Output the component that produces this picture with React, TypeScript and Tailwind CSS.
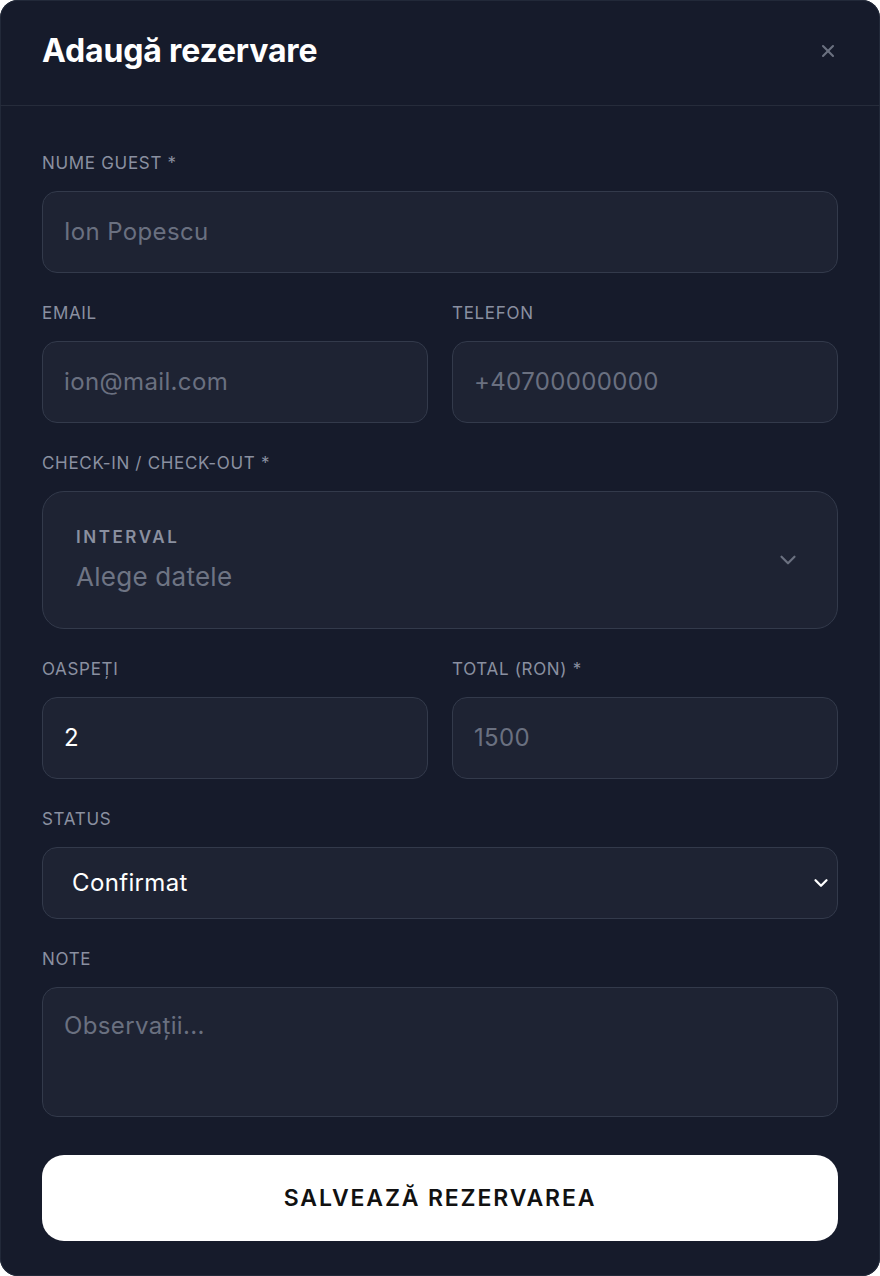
import { ChevronDown, X } from "lucide-react";

const font = { fontFamily: '"Inter", "Noto Sans", sans-serif' };

function Label({ children }: { children: React.ReactNode }) {
  return (
    <div className="h-5 text-[17px] leading-5 uppercase text-[#8a90a0] tracking-[0.04em]">
      {children}
    </div>
  );
}

function Input({ placeholder, value }: { placeholder?: string; value?: string }) {
  return (
    <div className="h-[82px] rounded-[15px] border border-[#333a4b] bg-[#1e2333] px-[21px] flex items-center text-[24px] tracking-[0.015em]">
      {value ? (
        <span className="text-white">{value}</span>
      ) : (
        <span className="text-[#6a7080]">{placeholder}</span>
      )}
    </div>
  );
}

function Field({ label, children }: { label: string; children: React.ReactNode }) {
  return (
    <div className="flex flex-col gap-[18px]">
      <Label>{label}</Label>
      {children}
    </div>
  );
}

export default function App() {
  return (
    <div
      style={font}
      className="w-[880px] h-[1276px] bg-[#161b2b] rounded-[18px] shadow-[inset_0_0_0_1px_#222939] overflow-hidden flex flex-col"
    >
      <div className="h-[106px] flex items-center justify-between px-[42px] border-b border-[#262c3b] pb-[4px]">
        <h1 className="text-[32px] font-bold text-white tracking-[-0.005em]">Adaugă rezervare</h1>
        <X className="w-[20px] h-[20px] text-[#6b7180]" strokeWidth={2.5} />
      </div>

      <div className="px-[42px] pt-[47px] flex flex-col gap-[30px]">
        <Field label="Nume guest *">
          <Input placeholder="Ion Popescu" />
        </Field>

        <div className="grid grid-cols-2 gap-6">
          <Field label="Email">
            <Input placeholder="ion@mail.com" />
          </Field>
          <Field label="Telefon">
            <Input placeholder="+40700000000" />
          </Field>
        </div>

        <Field label="Check-in / Check-out *">
          <div className="h-[138px] rounded-[22px] border border-[#333a4b] bg-[#1e2333] pl-[33px] pr-[36px] flex items-center justify-between">
            <div className="flex flex-col gap-[14px]">
              <div className="text-[17px] leading-5 font-semibold tracking-[0.15em] text-[#8a90a0]">INTERVAL</div>
              <div className="text-[26px] leading-8 tracking-[0.01em] text-[#6e7484]">Alege datele</div>
            </div>
            <ChevronDown className="w-[26px] h-[26px] text-[#6b7180]" strokeWidth={2} />
          </div>
        </Field>

        <div className="grid grid-cols-2 gap-6">
          <Field label="Oaspeți">
            <Input value="2" />
          </Field>
          <Field label="Total (RON) *">
            <Input placeholder="1500" />
          </Field>
        </div>

        <Field label="Status">
          <div className="h-[72px] rounded-[15px] border border-[#333a4b] bg-[#1e2333] pl-[29px] pr-[5px] flex items-center justify-between">
            <span className="text-[24px] tracking-[0.015em] text-white">Confirmat</span>
            <ChevronDown className="w-[22px] h-[22px] text-white" strokeWidth={2.5} />
          </div>
        </Field>

        <Field label="Note">
          <div className="h-[130px] rounded-[15px] border border-[#333a4b] bg-[#1e2333] px-[21px] pt-[24px] text-[24px] leading-7 tracking-[0.015em] text-[#6a7080]">
            Observații...
          </div>
        </Field>

        <div className="mt-[8px] h-[86px] rounded-[22px] bg-white flex items-center justify-center">
          <span className="text-[23px] font-semibold tracking-[0.08em] text-[#111]">SALVEAZĂ REZERVAREA</span>
        </div>
      </div>
    </div>
  );
}
